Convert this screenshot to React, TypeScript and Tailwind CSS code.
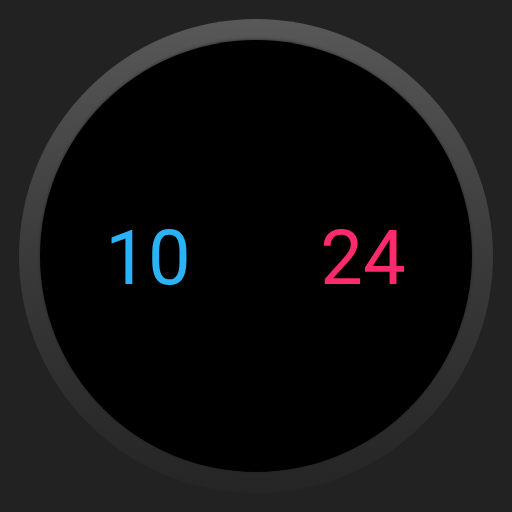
export default function App() {
  return (
    <div className="w-[512px] h-[512px] bg-[#222222] flex items-center justify-center">
      <div className="w-[474px] h-[474px] rounded-full bg-gradient-to-b from-[#585858] via-[#3a3a3a] to-[#252525] flex items-center justify-center">
        <div className="w-[432px] h-[432px] rounded-full bg-black flex items-center shadow-[0_-1px_3px_rgba(0,0,0,0.35)] pl-[28px] pt-[3px] gap-[55px] font-['Roboto',sans-serif] text-[76px] leading-none">
          <span className="w-[160px] text-center text-[#2ab4f7]">10</span>
          <span className="w-[160px] text-center text-[#ff2a6c]">24</span>
        </div>
      </div>
    </div>
  );
}
